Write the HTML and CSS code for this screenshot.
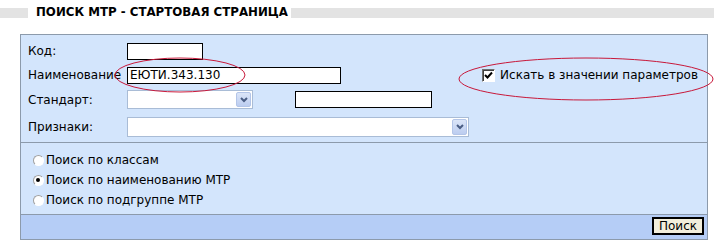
FILE: index.html
```html
<!DOCTYPE html>
<html lang="ru">
<head>
    <meta charset="UTF-8">
    <title>Поиск МТР</title>
    <link rel="stylesheet" href="styles.css">
</head>
<body>

<div class="page">
    <div class="title-bar">
        <span class="band band-left"></span>
        <h1>ПОИСК МТР - СТАРТОВАЯ СТРАНИЦА</h1>
        <span class="band band-right"></span>
    </div>

    <form class="panel" id="searchForm">
        <div class="fields">
            <label for="code">Код:</label>
            <div class="cell"><input type="text" id="code" class="input-code"></div>

            <label for="name">Наименование</label>
            <div class="cell">
                <input type="text" id="name" class="input-name" value="ЕЮТИ.343.130">
                <label class="check">
                    <span class="box">
                        <svg width="9" height="9" viewBox="0 0 9 9"><path d="M1 4 L3.5 6.5 L8 1.5" fill="none" stroke="#000" stroke-width="2"/></svg>
                    </span>
                    Искать в значении параметров
                </label>
            </div>

            <label>Стандарт:</label>
            <div class="cell">
                <div class="select select-standard">
                    <span class="select-value"></span>
                    <span class="select-arrow"><svg width="8" height="6" viewBox="0 0 8 6"><path d="M1 1 L4 4 L7 1" fill="none" stroke="#4a5d84" stroke-width="2"/></svg></span>
                </div>
                <input type="text" class="input-standard">
            </div>

            <label>Признаки:</label>
            <div class="cell">
                <div class="select select-signs">
                    <span class="select-value"></span>
                    <span class="select-arrow"><svg width="8" height="6" viewBox="0 0 8 6"><path d="M1 1 L4 4 L7 1" fill="none" stroke="#4a5d84" stroke-width="2"/></svg></span>
                </div>
            </div>
        </div>

        <div class="modes">
            <label class="mode"><span class="radio"></span>Поиск по классам</label>
            <label class="mode"><span class="radio on"></span>Поиск по наименованию МТР</label>
            <label class="mode"><span class="radio"></span>Поиск по подгруппе МТР</label>
        </div>

        <div class="actions">
            <button type="submit">Поиск</button>
        </div>
    </form>

    <!-- red hand-drawn marks over the form -->
    <svg class="marks" width="714" height="245" viewBox="0 0 714 245">
        <ellipse cx="180" cy="75" rx="65" ry="17" fill="none" stroke="#c8183a" stroke-width="1"/>
        <ellipse cx="586" cy="79" rx="127" ry="21" fill="none" stroke="#c8183a" stroke-width="1"/>
    </svg>
</div>

<script>
    document.getElementById("searchForm").addEventListener("submit", function(event) {
        event.preventDefault();
    });
</script>

</body>
</html>
```

FILE: styles.css
```css
body {
    margin: 0;
    font-family: "DejaVu Sans", Verdana, sans-serif;
    font-size: 12px;
    color: #000;
    background-color: #fff;
}
.page {
    position: relative;
    width: 714px;
    height: 245px;
}
.title-bar {
    display: flex;
    align-items: center;
    height: 26px;
}
.band {
    height: 10px;
    background-color: #e3e3e3;
}
.band-left {
    width: 28px;
}
.band-right {
    flex: 1;
}
h1 {
    margin: 0 3px 0 8px;
    font-size: 11.8px;
    font-weight: bold;
    line-height: 1;
    white-space: nowrap;
}
.panel {
    width: 688px;
    box-sizing: border-box;
    margin: 8px 0 0 20px;
    border: 1px solid #8c9aab;
    background-color: #d3e5fc;
}
.fields {
    display: grid;
    grid-template-columns: 99px 1fr;
    grid-template-rows: 24px 24px 25px 30px;
    align-items: center;
    padding: 4px 6px 0 7px;
    border-bottom: 1px solid #8c9aab;
}
.cell {
    display: flex;
    align-items: center;
}
input[type="text"] {
    box-sizing: border-box;
    height: 17px;
    padding: 0 2px;
    border: 1px solid #000;
    background-color: #fff;
    font-family: inherit;
    font-size: 12px;
    outline: none;
}
.input-code {
    width: 76px;
}
.input-name {
    width: 214px;
    height: 18px;
}
.input-standard {
    width: 137px;
    margin-left: 42px;
}
.check {
    display: flex;
    align-items: center;
    gap: 5px;
    margin-left: auto;
    margin-right: 3px;
}
.box {
    display: flex;
    align-items: center;
    justify-content: center;
    width: 13px;
    height: 13px;
    box-sizing: border-box;
    border: 1px solid #fff;
    border-top-color: #707070;
    border-left-color: #707070;
    background-color: #fff;
    box-shadow: inset 1px 1px 0 #404040;
}
.select {
    display: flex;
    box-sizing: border-box;
    border: 1px solid #a9bcd6;
    background-color: #fff;
}
.select-value {
    flex: 1;
}
.select-arrow {
    display: flex;
    align-items: center;
    justify-content: center;
    width: 15px;
    margin: 1px;
    box-sizing: border-box;
    border: 1px solid #b3c5e8;
    border-radius: 2px;
    background: linear-gradient(#dbe5f8, #bccdf0);
}
.select-standard {
    width: 126px;
    height: 19px;
}
.select-signs {
    width: 342px;
    height: 20px;
}
.modes {
    display: flex;
    flex-direction: column;
    padding: 7px 0 4px 12px;
    border-bottom: 1px solid #8c9aab;
}
.mode {
    display: flex;
    align-items: center;
    gap: 2px;
    height: 20px;
}
.radio {
    position: relative;
    width: 11px;
    height: 11px;
    box-sizing: border-box;
    border-radius: 50%;
    border: 1px solid #fff;
    border-top-color: #a0a0a0;
    border-left-color: #a0a0a0;
    background-color: #fff;
}
.radio.on::after {
    content: "";
    position: absolute;
    left: 2px;
    top: 2px;
    width: 4px;
    height: 4px;
    border-radius: 50%;
    background-color: #000;
}
.actions {
    display: flex;
    justify-content: flex-end;
    padding: 2px 3px 4px;
    background-color: #b5cdf6;
}
button {
    box-sizing: border-box;
    height: 18px;
    padding: 0 5px;
    border: 2px solid #000;
    background-color: #f2eedb;
    font-family: inherit;
    font-size: 12px;
    line-height: 1;
    cursor: pointer;
}
.marks {
    position: absolute;
    left: 0;
    top: 0;
    pointer-events: none;
}
```
